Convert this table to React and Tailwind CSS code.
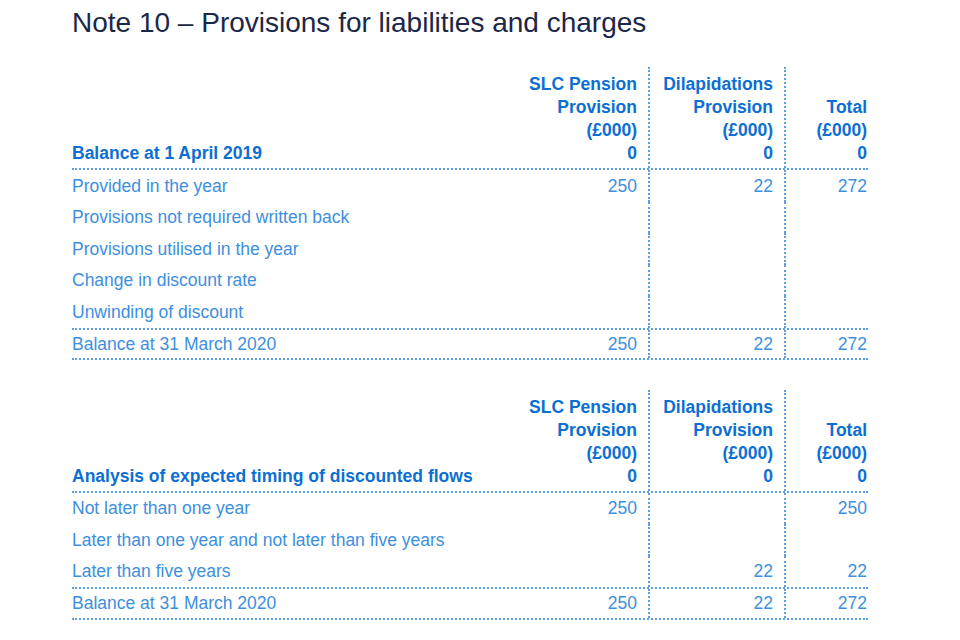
const DOT = "border-dotted border-[#5c9fe4]";

function Row({ label, vals, h, className = "" }) {
  return (
    <div className={`grid grid-cols-[448px_128px_136px_84px] ${className}`}>
      <div className={`flex items-center whitespace-nowrap ${h}`}>{label}</div>
      <div className={`flex items-center justify-end pr-[11px] ${h}`}>{vals[0]}</div>
      <div className={`flex items-center justify-end pr-[11px] border-l-2 ${DOT} ${h}`}>{vals[1]}</div>
      <div className={`flex items-center justify-end pr-[1px] border-l-2 ${DOT} ${h}`}>{vals[2]}</div>
    </div>
  );
}

function ProvTable({ title, rows, totals, rowH, balH, className = "" }) {
  return (
    <div className={`w-[796px] ${className}`}>
      {/* header */}
      <div className={`grid grid-cols-[448px_128px_136px_84px] border-b-2 ${DOT} font-bold text-[#0c6fd3]`}>
        <div className="flex items-end pt-[6px] pb-[3px]">
          <div className="h-[23px] leading-[23px] whitespace-nowrap">{title}</div>
        </div>
        <div className="pt-[6px] pb-[3px] flex flex-col items-end pr-[11px]">
          {["SLC Pension", "Provision", "(£000)", "0"].map((l) => (
            <div key={l} className="h-[23px] leading-[23px] whitespace-nowrap">{l}</div>
          ))}
        </div>
        <div className={`pt-[6px] pb-[3px] border-l-2 ${DOT} flex flex-col items-end pr-[11px]`}>
          {["Dilapidations", "Provision", "(£000)", "0"].map((l) => (
            <div key={l} className="h-[23px] leading-[23px] whitespace-nowrap">{l}</div>
          ))}
        </div>
        <div className={`pt-[6px] pb-[3px] border-l-2 ${DOT} flex flex-col items-end justify-end pr-[1px]`}>
          {["Total", "(£000)", "0"].map((l) => (
            <div key={l} className="h-[23px] leading-[23px] whitespace-nowrap">{l}</div>
          ))}
        </div>
      </div>

      {/* body */}
      <div className="text-[#3d8fe0]">
        {rows.map((r) => (
          <Row key={r[0]} label={r[0]} vals={r.slice(1)} h={rowH} />
        ))}
        <Row
          label="Balance at 31 March 2020"
          vals={totals}
          h={balH}
          className={`border-y-2 ${DOT}`}
        />
      </div>
    </div>
  );
}

export default function App() {
  return (
    <div className="w-[960px] h-[640px] bg-white overflow-hidden pl-[72px] font-['Liberation_Sans',Arial,sans-serif] text-[17.5px]">
      <h1 className="pt-[7px] text-[28px] leading-[32px] text-[#1b2748] whitespace-nowrap">
        Note 10 – Provisions for liabilities and charges
      </h1>

      <ProvTable
        className="mt-[28px]"
        title="Balance at 1 April 2019"
        rowH="h-[31.6px]"
        balH="h-[28px]"
        rows={[
          ["Provided in the year", "250", "22", "272"],
          ["Provisions not required written back", "", "", ""],
          ["Provisions utilised in the year", "", "", ""],
          ["Change in discount rate", "", "", ""],
          ["Unwinding of discount", "", "", ""],
        ]}
        totals={["250", "22", "272"]}
      />

      <ProvTable
        className="mt-[30px]"
        title="Analysis of expected timing of discounted flows"
        rowH="h-[31.3px]"
        balH="h-[29px]"
        rows={[
          ["Not later than one year", "250", "", "250"],
          ["Later than one year and not later than five years", "", "", ""],
          ["Later than five years", "", "22", "22"],
        ]}
        totals={["250", "22", "272"]}
      />
    </div>
  );
}
